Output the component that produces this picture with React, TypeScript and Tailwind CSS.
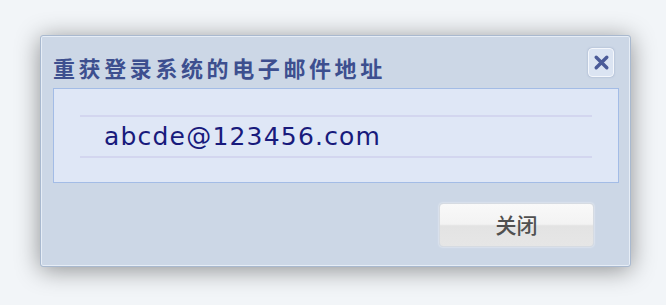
import React from "react";

const RetrieveEmailDialog = () => {
  return (
    <div className="w-[666px] h-[305px] bg-[#f2f5f8] pt-[35px] pl-[40px] overflow-hidden">
      <div className="w-[591px] h-[232px] flex flex-col rounded-[3px] border border-[#a9b9cf] bg-[#ccd7e6] shadow-[0_3px_24px_rgba(0,0,0,0.42)] ring-1 ring-inset ring-[#e6edf6]">
        {/* 标题栏 */}
        <div className="flex justify-between h-[52px] pl-[12px] pr-[16px]">
          <h1
            className="mt-[18px] text-[22px] leading-[26px] font-bold tracking-[3.6px] text-[#3d4f8f]"
            style={{ fontFamily: '"Noto Sans CJK SC", "DejaVu Sans", sans-serif' }}
          >
            重获登录系统的电子邮件地址
          </h1>
          <button className="mt-[12px] w-[26px] h-[29px] flex items-center justify-center rounded-[4px] border border-[#f4f7fc] bg-[#dbe4f2] shadow-[0_0_2px_rgba(120,140,180,0.6)]">
            <svg width="17" height="17" viewBox="0 0 16 16">
              <path d="M3 3 L13 13 M13 3 L3 13" stroke="#4b5b98" strokeWidth="3.2" strokeLinecap="round" />
            </svg>
          </button>
        </div>

        {/* 内容区 */}
        <div className="ml-[12px] mr-[11px] h-[95px] border border-[#a3bce6] bg-[#dfe7f6] px-[26px] pt-[26px]">
          <div className="h-[2px] bg-[#d3d6ef]" />
          <div
            className="h-[39px] pl-[24px] flex items-center text-[25px] tracking-[1.2px] text-[#181a7c]"
            style={{ fontFamily: '"DejaVu Sans", Verdana, sans-serif' }}
          >
            abcde@123456.com
          </div>
          <div className="h-[2px] bg-[#d3d6ef]" />
        </div>

        {/* 按钮区 */}
        <div className="flex justify-end pr-[36px] pt-[20px]">
          <button
            className="w-[155px] h-[44px] rounded-[4px] border border-[#d6dbe2] bg-[linear-gradient(to_bottom,#f9f9f9_0%,#f3f3f3_48%,#e3e3e3_52%,#e6e6e6_100%)] shadow-[0_0_2px_rgba(255,255,255,0.9)] text-[21px] font-medium text-[#505050]"
            style={{ fontFamily: '"Noto Sans CJK SC", "DejaVu Sans", sans-serif' }}
          >
            关闭
          </button>
        </div>
      </div>
    </div>
  );
};

export default function App() {
  return <RetrieveEmailDialog />;
}
